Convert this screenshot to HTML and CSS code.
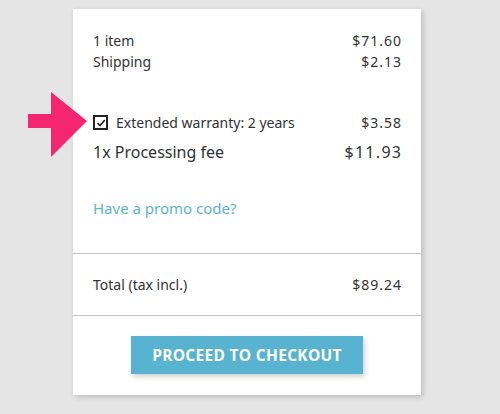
FILE: index.html
```html
<!DOCTYPE html>
<html>
<head>
<meta charset="utf-8">
<link rel="stylesheet" href="styles.css">
</head>
<body>
<div class="stage">
  <div class="card">
    <div class="section lines">
      <div class="row"><span>1 item</span><span class="price">$71.60</span></div>
      <div class="row"><span>Shipping</span><span class="price">$2.13</span></div>
      <div class="row warranty">
        <span class="label"><span class="check"><svg width="10" height="10" viewBox="0 0 10 10"><path d="M1.5 5.2 L4 7.6 L8.8 2" fill="none" stroke="#222" stroke-width="1.6"/></svg></span>Extended warranty: 2 years</span>
        <span class="price">$3.58</span>
      </div>
      <div class="row fee"><span>1x Processing fee</span><span class="price">$11.93</span></div>
      <a class="promo" href="#">Have a promo code?</a>
    </div>
    <div class="section total">
      <div class="row"><span>Total (tax incl.)</span><span class="price">$89.24</span></div>
    </div>
    <div class="section action">
      <button class="checkout">PROCEED TO CHECKOUT</button>
    </div>
  </div>
  <svg class="arrow" width="90" height="70" viewBox="0 0 90 70"><polygon points="8,22 31,22 31,0 67,29 31,65 31,36 8,36" fill="#f5256f"/></svg>
</div>
</body>
</html>
```
FILE: styles.css
```css
html, body {
  margin: 0;
  padding: 0;
}
body {
  background: #e5e5e5;
  font-family: "Noto Sans", "Open Sans", sans-serif;
  color: #333;
  width: 500px;
  height: 414px;
  overflow: hidden;
}
.stage {
  position: relative;
  padding-top: 9px;
  padding-left: 73px;
}
.card {
  width: 348px;
  height: 386px;
  background: #fff;
  box-shadow: 2px 2px 6px rgba(0,0,0,0.18);
  display: flex;
  flex-direction: column;
}
.section {
  padding: 0 20px;
}
.lines {
  padding-top: 21px;
  padding-bottom: 35px;
  border-bottom: 1px solid #c4c4c4;
}
.row {
  display: flex;
  justify-content: space-between;
  font-size: 14px;
  line-height: 21px;
}
.price {
  letter-spacing: 1px;
  margin-right: -1px;
}
.warranty {
  margin-top: 40px;
  align-items: center;
}
.label {
  display: flex;
  align-items: center;
}
.check {
  width: 11px;
  height: 11px;
  border: 2px solid #222;
  display: inline-flex;
  align-items: center;
  justify-content: center;
  margin-right: 8px;
}
.check svg {
  display: block;
}
.fee {
  margin-top: 8px;
  font-size: 16px;
  line-height: 22px;
}
.fee .price {
  letter-spacing: 1.3px;
  margin-right: -1.3px;
}
.promo {
  display: block;
  margin-top: 35px;
  font-size: 15px;
  line-height: 20px;
  color: #5ab5d2;
  text-decoration: none;
}
.total {
  padding-top: 21px;
  padding-bottom: 20px;
  border-bottom: 1px solid #c4c4c4;
}
.total .row {
  line-height: 20px;
}
.action {
  display: flex;
  justify-content: center;
  padding-top: 20px;
}
.checkout {
  width: 232px;
  height: 38px;
  border: none;
  background: #57b3d0;
  color: #fff;
  font-family: "Open Sans", "Noto Sans", sans-serif;
  font-weight: 700;
  font-size: 15.5px;
  letter-spacing: 0.3px;
  box-shadow: 2px 3px 5px rgba(0,0,0,0.18);
  padding: 0;
}
.arrow {
  position: absolute;
  left: 20px;
  top: 92px;
}
```
